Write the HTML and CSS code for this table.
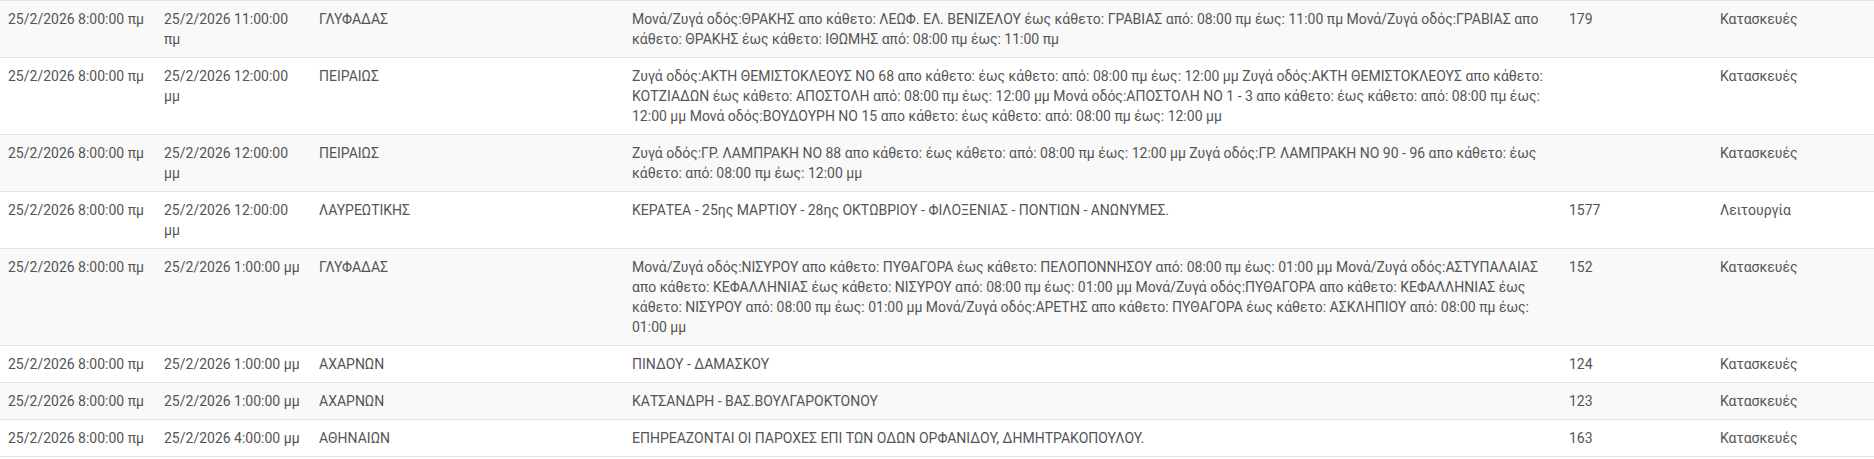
FILE: index.html
```html
<!DOCTYPE html>
<html lang="el">
<head>
<meta charset="utf-8">
<title>Διακοπές</title>
<link rel="stylesheet" href="styles.css">
</head>
<body>
<table class="grid">
  <colgroup>
    <col class="c-start"><col class="c-end"><col class="c-area"><col class="c-desc"><col class="c-num"><col class="c-type">
  </colgroup>
  <tbody>
    <tr>
      <td>25/2/2026 8:00:00 πμ</td>
      <td>25/2/2026 11:00:00 πμ</td>
      <td>ΓΛΥΦΑΔΑΣ</td>
      <td>Μονά/Ζυγά οδός:ΘΡΑΚΗΣ απο κάθετο: ΛΕΩΦ. ΕΛ. ΒΕΝΙΖΕΛΟΥ έως κάθετο: ΓΡΑΒΙΑΣ από: 08:00 πμ έως: 11:00 πμ Μονά/Ζυγά οδός:ΓΡΑΒΙΑΣ απο κάθετο: ΘΡΑΚΗΣ έως κάθετο: ΙΘΩΜΗΣ από: 08:00 πμ έως: 11:00 πμ</td>
      <td>179</td>
      <td>Κατασκευές</td>
    </tr>
    <tr>
      <td>25/2/2026 8:00:00 πμ</td>
      <td>25/2/2026 12:00:00 μμ</td>
      <td>ΠΕΙΡΑΙΩΣ</td>
      <td>Ζυγά οδός:ΑΚΤΗ ΘΕΜΙΣΤΟΚΛΕΟΥΣ ΝΟ 68 απο κάθετο: έως κάθετο: από: 08:00 πμ έως: 12:00 μμ Ζυγά οδός:ΑΚΤΗ ΘΕΜΙΣΤΟΚΛΕΟΥΣ απο κάθετο: ΚΟΤΖΙΑΔΩΝ έως κάθετο: ΑΠΟΣΤΟΛΗ από: 08:00 πμ έως: 12:00 μμ Μονά οδός:ΑΠΟΣΤΟΛΗ ΝΟ 1 - 3 απο κάθετο: έως κάθετο: από: 08:00 πμ έως: 12:00 μμ Μονά οδός:ΒΟΥΔΟΥΡΗ ΝΟ 15 απο κάθετο: έως κάθετο: από: 08:00 πμ έως: 12:00 μμ</td>
      <td></td>
      <td>Κατασκευές</td>
    </tr>
    <tr>
      <td>25/2/2026 8:00:00 πμ</td>
      <td>25/2/2026 12:00:00 μμ</td>
      <td>ΠΕΙΡΑΙΩΣ</td>
      <td>Ζυγά οδός:ΓΡ. ΛΑΜΠΡΑΚΗ ΝΟ 88 απο κάθετο: έως κάθετο: από: 08:00 πμ έως: 12:00 μμ Ζυγά οδός:ΓΡ. ΛΑΜΠΡΑΚΗ ΝΟ 90 - 96 απο κάθετο: έως κάθετο: από: 08:00 πμ έως: 12:00 μμ</td>
      <td></td>
      <td>Κατασκευές</td>
    </tr>
    <tr>
      <td>25/2/2026 8:00:00 πμ</td>
      <td>25/2/2026 12:00:00 μμ</td>
      <td>ΛΑΥΡΕΩΤΙΚΗΣ</td>
      <td>ΚΕΡΑΤΕΑ - 25ης ΜΑΡΤΙΟΥ - 28ης ΟΚΤΩΒΡΙΟΥ - ΦΙΛΟΞΕΝΙΑΣ - ΠΟΝΤΙΩΝ - ΑΝΩΝΥΜΕΣ.</td>
      <td>1577</td>
      <td>Λειτουργία</td>
    </tr>
    <tr>
      <td>25/2/2026 8:00:00 πμ</td>
      <td>25/2/2026 1:00:00 μμ</td>
      <td>ΓΛΥΦΑΔΑΣ</td>
      <td>Μονά/Ζυγά οδός:ΝΙΣΥΡΟΥ απο κάθετο: ΠΥΘΑΓΟΡΑ έως κάθετο: ΠΕΛΟΠΟΝΝΗΣΟΥ από: 08:00 πμ έως: 01:00 μμ Μονά/Ζυγά οδός:ΑΣΤΥΠΑΛΑΙΑΣ απο κάθετο: ΚΕΦΑΛΛΗΝΙΑΣ έως κάθετο: ΝΙΣΥΡΟΥ από: 08:00 πμ έως: 01:00 μμ Μονά/Ζυγά οδός:ΠΥΘΑΓΟΡΑ απο κάθετο: ΚΕΦΑΛΛΗΝΙΑΣ έως κάθετο: ΝΙΣΥΡΟΥ από: 08:00 πμ έως: 01:00 μμ Μονά/Ζυγά οδός:ΑΡΕΤΗΣ απο κάθετο: ΠΥΘΑΓΟΡΑ έως κάθετο: ΑΣΚΛΗΠΙΟΥ από: 08:00 πμ έως: 01:00 μμ</td>
      <td>152</td>
      <td>Κατασκευές</td>
    </tr>
    <tr>
      <td>25/2/2026 8:00:00 πμ</td>
      <td>25/2/2026 1:00:00 μμ</td>
      <td>ΑΧΑΡΝΩΝ</td>
      <td>ΠΙΝΔΟΥ - ΔΑΜΑΣΚΟΥ</td>
      <td>124</td>
      <td>Κατασκευές</td>
    </tr>
    <tr>
      <td>25/2/2026 8:00:00 πμ</td>
      <td>25/2/2026 1:00:00 μμ</td>
      <td>ΑΧΑΡΝΩΝ</td>
      <td>ΚΑΤΣΑΝΔΡΗ - ΒΑΣ.ΒΟΥΛΓΑΡΟΚΤΟΝΟΥ</td>
      <td>123</td>
      <td>Κατασκευές</td>
    </tr>
    <tr>
      <td>25/2/2026 8:00:00 πμ</td>
      <td>25/2/2026 4:00:00 μμ</td>
      <td>ΑΘΗΝΑΙΩΝ</td>
      <td>ΕΠΗΡΕΑΖΟΝΤΑΙ ΟΙ ΠΑΡΟΧΕΣ ΕΠΙ ΤΩΝ ΟΔΩΝ ΟΡΦΑΝΙΔΟΥ, ΔΗΜΗΤΡΑΚΟΠΟΥΛΟΥ.</td>
      <td>163</td>
      <td>Κατασκευές</td>
    </tr>
  </tbody>
</table>
</body>
</html>
```

FILE: styles.css
```css
html, body {
  margin: 0;
  padding: 0;
  background: #fff;
}

body {
  font-family: Roboto, "Noto Sans", sans-serif;
  font-size: 14px;
  line-height: 20px;
  color: #555;
}

.grid {
  width: 1874px;
  border-collapse: collapse;
  border-spacing: 0;
  table-layout: fixed;
  border-bottom: 1px solid #e5e5e5;
}

.c-start { width: 156px; }
.c-end { width: 155px; }
.c-area { width: 313px; }
.c-desc { width: 937px; }
.c-num { width: 151px; }
.c-type { width: 162px; }

.grid td {
  padding: 8px;
  vertical-align: top;
  border-top: 1px solid #e5e5e5;
  text-align: left;
}

.grid tbody tr:nth-child(odd) {
  background: #f9f9f9;
}
```
